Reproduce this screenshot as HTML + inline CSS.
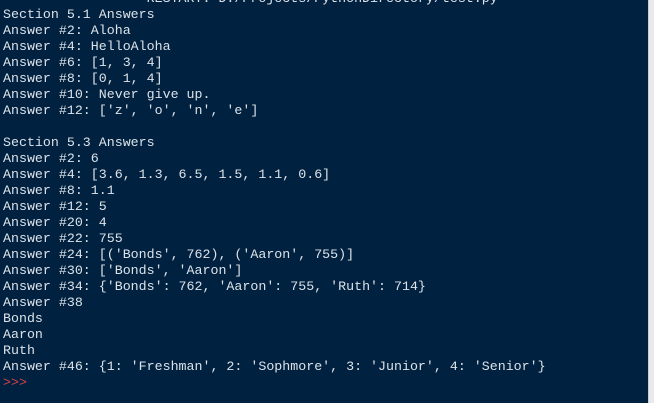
<!DOCTYPE html>
<html><head><style>
html,body{margin:0;padding:0;width:654px;height:403px;overflow:hidden;background:#002240;}
pre{position:absolute;left:3px;top:-9px;margin:0;font-family:"Liberation Mono",monospace;font-size:13.3px;line-height:16px;color:#dde2e8;}
.r{color:#d9414a;}
.sb{position:absolute;left:648px;top:0;width:6px;height:403px;background:#e9e9ed;border-left:1px solid #c8ccd4;}
</style></head><body>
<pre>                  RESTART: D:/Projects/PythonDirectory/test.py
Section 5.1 Answers
Answer #2: Aloha
Answer #4: HelloAloha
Answer #6: [1, 3, 4]
Answer #8: [0, 1, 4]
Answer #10: Never give up.
Answer #12: ['z', 'o', 'n', 'e']

Section 5.3 Answers
Answer #2: 6
Answer #4: [3.6, 1.3, 6.5, 1.5, 1.1, 0.6]
Answer #8: 1.1
Answer #12: 5
Answer #20: 4
Answer #22: 755
Answer #24: [('Bonds', 762), ('Aaron', 755)]
Answer #30: ['Bonds', 'Aaron']
Answer #34: {'Bonds': 762, 'Aaron': 755, 'Ruth': 714}
Answer #38
Bonds
Aaron
Ruth
Answer #46: {1: 'Freshman', 2: 'Sophmore', 3: 'Junior', 4: 'Senior'}
<span class="r">&gt;&gt;&gt;</span></pre>
<div class="sb"></div>
</body></html>
